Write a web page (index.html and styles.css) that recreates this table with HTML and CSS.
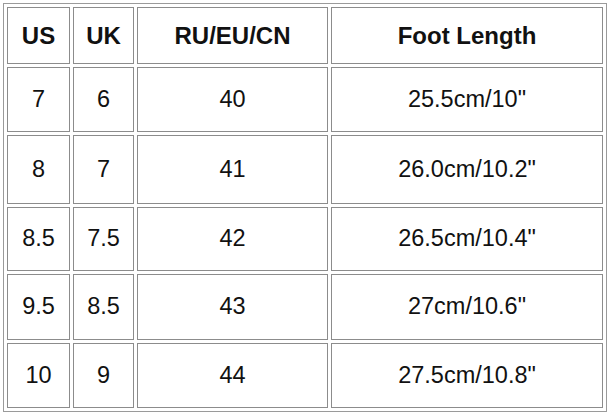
FILE: index.html
```html
<!DOCTYPE html>
<html>
<head>
<meta charset="utf-8">
<link rel="stylesheet" href="styles.css">
</head>
<body>
<table class="size-table">
  <colgroup>
    <col class="c-us"><col class="c-uk"><col class="c-eu"><col class="c-foot">
  </colgroup>
  <thead>
    <tr class="r-head"><th>US</th><th>UK</th><th>RU/EU/CN</th><th>Foot Length</th></tr>
  </thead>
  <tbody>
    <tr class="r1"><td>7</td><td>6</td><td>40</td><td>25.5cm/10"</td></tr>
    <tr class="r2"><td>8</td><td>7</td><td>41</td><td>26.0cm/10.2"</td></tr>
    <tr class="r3"><td>8.5</td><td>7.5</td><td>42</td><td>26.5cm/10.4"</td></tr>
    <tr class="r4"><td>9.5</td><td>8.5</td><td>43</td><td>27cm/10.6"</td></tr>
    <tr class="r5"><td>10</td><td>9</td><td>44</td><td>27.5cm/10.8"</td></tr>
  </tbody>
</table>
</body>
</html>
```
FILE: styles.css
```css
html, body {
  margin: 0;
  padding: 0;
  background: #ffffff;
}
body {
  padding: 3px 0 0 3px;
  font-family: "Liberation Sans", Arial, sans-serif;
  color: #111111;
}
.size-table {
  width: 604px;
  table-layout: fixed;
  border-collapse: separate;
  border-spacing: 3px;
  border: 1px solid #9a9a9a;
}
.c-us { width: 63px; }
.c-uk { width: 61px; }
.c-eu { width: 191px; }
.c-foot { width: 272px; }
.size-table th,
.size-table td {
  box-sizing: border-box;
  border: 1px solid #8c8c8c;
  padding: 0;
  text-align: center;
  vertical-align: middle;
  font-size: 23.5px;
  line-height: 1;
}
.size-table th {
  font-weight: bold;
  font-size: 24px;
}
.r-head th { height: 57px; }
.r1 td { height: 65px; }
.r2 td { height: 69px; }
.r3 td { height: 64px; }
.r4 td { height: 66px; }
.r5 td { height: 65px; }
```
